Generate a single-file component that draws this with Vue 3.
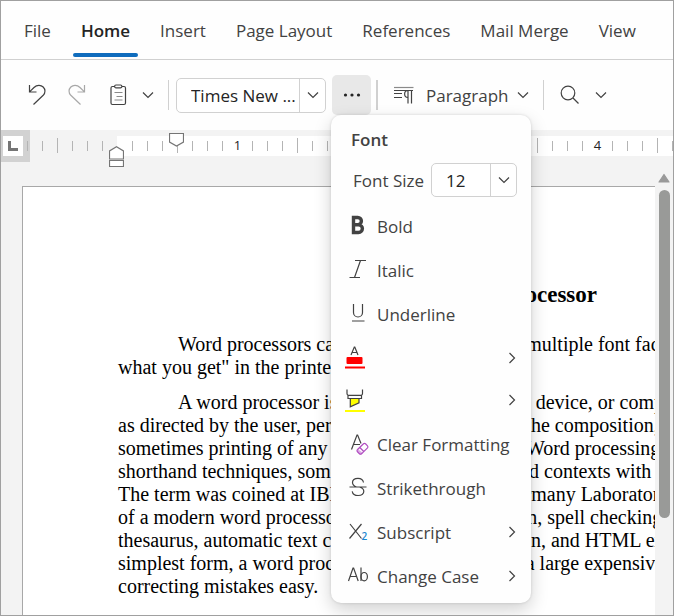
<script setup>
import { ref } from 'vue'

const tabs = ['File', 'Home', 'Insert', 'Page Layout', 'References', 'Mail Merge', 'View']
const activeTab = ref('Home')
const fontName = ref('Times New ...')
const fontSize = ref('12')

const menuItems = [
  { id: 'bold', label: 'Bold' },
  { id: 'italic', label: 'Italic' },
  { id: 'underline', label: 'Underline' },
  { id: 'color', label: '', name: 'Font color', sub: true },
  { id: 'highlight', label: '', name: 'Highlight color', sub: true },
  { id: 'clear', label: 'Clear Formatting' },
  { id: 'strike', label: 'Strikethrough' },
  { id: 'subscript', label: 'Subscript', sub: true },
  { id: 'case', label: 'Change Case', sub: true },
]

// Eight ticks per inch, counted from the left margin (zero).
const ticks = Array.from({ length: 120 }, (_, i) => {
  const n = i - 6
  const inch = n % 8 === 0
  return { n, label: inch && n > 0 ? String(n / 8) : '', blank: inch, tall: !inch && n % 4 === 0 }
})

const first = [
  'Word processors can usually create several multiple font faces on the screen,',
  'what you get" in the printed output.',
]
const second = [
  'A word processor is an electronic or manual device, or computer software application, that',
  'as directed by the user, performs word processing: the composition, editing, formatting and',
  'sometimes printing of any sort of written material. Word processing can also refer to advanced',
  'shorthand techniques, sometimes used in specialized contexts with a specially modified typewriter.',
  "The term was coined at IBM's Böblingen, West Germany Laboratory in the 1960s. Typical features",
  'of a modern word processor include font application, spell checking, grammar checking, a built-in',
  'thesaurus, automatic text correction, Web integration, and HTML exporting, among others. In its',
  'simplest form, a word processor is little more than a large expensive typewriter that makes',
  'correcting mistakes easy.',
]
</script>

<template>
  <div class="editor">
    <nav class="tabs" aria-label="Ribbon">
      <button
        v-for="t in tabs"
        :key="t"
        type="button"
        class="tab"
        :class="{ active: t === activeTab }"
        @click="activeTab = t"
      >{{ t }}</button>
    </nav>

    <div class="toolbar">
      <button type="button" class="tool undo" aria-label="Undo">
        <svg width="20" height="22" viewBox="0 0 20 22"><path d="M2.500 1v7h7M2.800 7.700L7 3.500C10 .5 14 .8 16.200 3s2.500 5.800 0 8.300L6.500 20.500" /></svg>
      </button>
      <button type="button" class="tool redo" aria-label="Redo">
        <svg width="20" height="22" viewBox="0 0 20 22"><path d="M17.500 1v7h-7M17.200 7.700L13 3.500C10 .5 6 .8 3.800 3s-2.500 5.800 0 8.300L13.500 20.500" /></svg>
      </button>
      <button type="button" class="tool paste" aria-label="Paste">
        <svg width="18" height="22" viewBox="0 0 18 22"><path d="M5.500 2.500H3.500A1.500 1.500 0 0 0 2 4v15a1.500 1.500 0 0 0 1.500 1.500H15a1.500 1.500 0 0 0 1.500-1.500V4A1.500 1.500 0 0 0 15 2.500h-2M7 1h4.500a1.300 1.300 0 0 1 0 2.800H7A1.300 1.300 0 0 1 7 1z" /><path class="faint" d="M5.500 8.500h8M7.500 12.500h6M5.500 16h8" /></svg>
      </button>
      <button type="button" class="tool drop" aria-label="Paste options">
        <svg width="12" height="8" viewBox="0 0 12 8"><path d="M1 1.500l5 5 5-5" /></svg>
      </button>
      <span class="sep"></span>
      <div class="combo font-combo">
        <input v-model="fontName" type="text" aria-label="Font family" />
        <button type="button" aria-label="Show fonts">
          <svg width="12" height="8" viewBox="0 0 12 8"><path d="M1 1.500l5 5 5-5" /></svg>
        </button>
      </div>
      <div class="more-wrap">
        <button type="button" class="more" aria-label="More font commands" aria-expanded="true">
          <svg width="18" height="4" viewBox="0 0 18 4"><circle cx="2.500" cy="2" r="1.600" /><circle cx="9" cy="2" r="1.600" /><circle cx="15.500" cy="2" r="1.600" /></svg>
        </button>

        <div class="menu">
          <h2>Font</h2>
          <div class="size-row">
            <label for="font-size">Font Size</label>
            <div class="combo size-combo">
              <input id="font-size" v-model="fontSize" type="text" />
              <button type="button" aria-label="Show sizes">
                <svg width="12" height="8" viewBox="0 0 12 8"><path d="M1 1.500l5 5 5-5" /></svg>
              </button>
            </div>
          </div>
          <button
            v-for="m in menuItems"
            :key="m.id"
            type="button"
            class="item"
            :class="m.id"
            :aria-label="m.name"
          >
            <svg class="icon" width="24" height="24" viewBox="0 0 24 24">
              <path v-if="m.id === 'bold'" class="heavy" d="M8.500 3.500h4.300a3.500 3.500 0 0 1 0 7.200H8.500zM8.500 10.700h5a3.900 3.900 0 0 1 0 7.800h-5z" />
              <path v-else-if="m.id === 'italic'" d="M10 2.500h11M4.500 19.500h10.500M15.500 2.500L9.500 19.500" />
              <path v-else-if="m.id === 'underline'" d="M8.500 2v8.500a4.500 4.500 0 0 0 9 0V2M7 19h12.500" />
              <g v-else-if="m.id === 'color'">
                <path d="M8 9L11.300 1h.5L15 9M9 6.500h5" />
                <rect x="3.500" y="11" width="16" height="7" rx="1" fill="#f00" stroke="none" />
                <rect x="2" y="20.500" width="20" height="2" fill="#f00" stroke="none" />
              </g>
              <g v-else-if="m.id === 'highlight'">
                <path d="M7.300 10.500h8.700v4.300L7.300 18.700z" fill="#ff0" />
                <path d="M4 1.500v4a2 2 0 0 0 1 1.800h13.500a2 2 0 0 0 1-1.800v-4M5 7.300v3.200h13.500V7.300" />
                <rect x="2" y="22" width="20" height="2" fill="#ff0" stroke="none" />
              </g>
              <g v-else-if="m.id === 'clear'">
                <path d="M6.500 17.500L12 3h.6L16 11.500M8.500 12.500h6.500" />
                <path d="M13 17.300L18 21l-1.500 1.300a1.500 1.500 0 0 1-2 0L12.500 20.300a1.500 1.500 0 0 1 0-2.300z" class="eraser-fill" />
                <path d="M12.600 17.500L18.500 11.800a1.500 1.500 0 0 1 2 0l2 2a1.500 1.500 0 0 1 0 2L16.500 21.800a1.500 1.500 0 0 1-2 0l-2-2a1.500 1.500 0 0 1 .1-2.300zM14.800 15.500l4 4" class="eraser" />
              </g>
              <path v-else-if="m.id === 'strike'" d="M4.500 11h17M18.500 6.500c-.4-2.700-2.400-4.200-5.500-4.200-3.200 0-5.500 1.600-5.500 4.200 0 2.200 1.500 3.500 4 4.500M14.500 11c2.600.8 4.300 2 4.300 4.300 0 2.600-2.300 4.200-5.700 4.200-3.300 0-5.400-1.600-5.900-4.200" />
              <g v-else-if="m.id === 'subscript'">
                <path d="M5 4L16.500 18.500M16.500 4L4.500 18.500" />
                <text x="16.500" y="20" class="glyph-sub">2</text>
              </g>
              <g v-else>
                <path d="M3.500 17L8 4h.6L13.200 17M5.200 12.500h6.500" />
                <path d="M16 3.500v13.500" /><ellipse cx="19.200" cy="12.700" rx="3.200" ry="4.200" />
              </g>
            </svg>
            <span class="label">{{ m.label }}</span>
            <svg v-if="m.sub" class="arrow" width="8" height="12" viewBox="0 0 8 12"><path d="M1.500 1l5 5-5 5" /></svg>
          </button>
        </div>
      </div>
      <span class="sep wide"></span>
      <button type="button" class="tool para">
        <svg width="22" height="18" viewBox="0 0 22 18"><path d="M1 1.500h19.500" class="faint" /><path d="M1 4.500h19M1 7.500h8M1 11.500h8M15 4.500c-4.500 0-4.500 7 0 7M15 4.500v13M18.500 4.500v13" /></svg>
        <span>Paragraph</span>
        <svg width="12" height="8" viewBox="0 0 12 8"><path d="M1 1.500l5 5 5-5" /></svg>
      </button>
      <span class="sep"></span>
      <button type="button" class="tool find" aria-label="Find">
        <svg width="20" height="20" viewBox="0 0 20 20"><circle cx="8" cy="8" r="6.800" /><path d="M13 13l5.500 5.500" /></svg>
        <svg width="12" height="8" viewBox="0 0 12 8"><path d="M1 1.500l5 5 5-5" /></svg>
      </button>
    </div>

    <div class="ruler">
      <button type="button" class="corner" aria-label="Tab stop">
        <svg width="20" height="20" viewBox="0 0 20 20"><path d="M6.500 5v8.500H15" /></svg>
      </button>
      <div class="scale">
        <span v-for="t in ticks" :key="t.n" class="cell" :class="{ tall: t.tall, blank: t.blank }">{{ t.label }}</span>
      </div>
      <svg class="first-indent" width="15" height="14" viewBox="0 0 15 14"><path d="M.5 .5h14v8.500L7.500 13 .5 9z" /></svg>
      <svg class="left-indent" width="15" height="21" viewBox="0 0 15 21"><path d="M.5 13V5L7.500 .8 14.500 5v8zM.5 14.500h14v6H.5z" /></svg>
    </div>

    <div class="workspace">
      <main class="page">
        <h1>A Word Processor</h1>
        <p><span v-for="l in first" :key="l">{{ l }}</span></p>
        <p><span v-for="l in second" :key="l">{{ l }}</span></p>
      </main>
      <div class="scrollbar">
        <svg width="12" height="10" viewBox="0 0 12 10"><path d="M6 1.500L11 9H1z" /></svg>
        <span class="thumb"></span>
        <span class="rest"></span>
      </div>
    </div>
  </div>
</template>

<style>
body {
  background: #fefefe;
}
</style>

<style scoped>
* {
  box-sizing: border-box;
}
.editor {
  display: flex;
  flex-direction: column;
  height: 100vh;
  overflow: hidden;
  border: 1px solid #a0a0a0;
  background: #fefefe;
  color: #424242;
  font-family: "Open Sans", "Noto Sans", sans-serif;
  font-size: 17px;
}
button,
input {
  font: inherit;
  color: inherit;
  background: none;
  border: 0;
  padding: 0;
  margin: 0;
  outline: 0;
}
svg {
  flex: none;
  display: block;
  fill: none;
  stroke: #424242;
  stroke-width: 1.2;
}
.faint {
  stroke: #8a8a8a;
}
.tabs {
  flex: none;
  display: flex;
  gap: 14px;
  height: 59px;
  padding: 0 15px;
  border-bottom: 1px solid #d0d0d0;
}
.tab {
  height: 56px;
  padding: 6px 8px 0;
  border-bottom: 4px solid transparent;
  white-space: nowrap;
}
.tab.active {
  position: relative;
  color: #242424;
  font-weight: 600;
}
.tab.active::after {
  content: "";
  position: absolute;
  left: 0;
  right: 0;
  bottom: -4px;
  height: 4px;
  border-radius: 2px;
  background: #0f6cbd;
}
.toolbar {
  flex: none;
  display: flex;
  align-items: center;
  height: 70px;
  padding-left: 26px;
}
.tool {
  display: flex;
  align-items: center;
}
.undo {
  margin-right: 20px;
}
.redo {
  margin-right: 22px;
  opacity: 0.45;
}
.paste {
  margin-right: 15px;
}
.sep {
  width: 1px;
  height: 30px;
  margin: 0 7px 0 14px;
  background: #d0d0d0;
}
.sep.wide {
  width: 2px;
  margin: 0 15px 0 5px;
}
.combo {
  display: flex;
  height: 35px;
  border: 1px solid #d1d1d1;
  border-radius: 5px;
  background: #fff;
  color: #242424;
}
.combo input {
  flex: 1;
  min-width: 0;
  padding-left: 14px;
}
.combo button {
  display: grid;
  place-items: center;
  width: 26px;
  border-left: 1px solid #d1d1d1;
}
.font-combo {
  width: 150px;
  margin-right: 6px;
}
.more-wrap {
  position: relative;
}
.more {
  display: grid;
  place-items: center;
  width: 39px;
  height: 40px;
  border-radius: 5px;
  background: #e8e8e8;
}
.more svg {
  fill: #242424;
  stroke: none;
}
.para span {
  margin: 0 8px 0 11px;
}
.find {
  gap: 15px;
  margin-left: 9px;
}
.menu {
  position: absolute;
  z-index: 5;
  top: 100%;
  left: -1px;
  width: 200px;
  padding: 10px 0 5px;
  border-radius: 10px;
  background: #fefefe;
  box-shadow: 0 7px 18px rgba(0, 0, 0, 0.18), 0 0 3px rgba(0, 0, 0, 0.14);
}
.menu h2 {
  margin: 0;
  padding-left: 20px;
  font-size: 17px;
  font-weight: 600;
  line-height: 30px;
}
.size-row {
  display: flex;
  align-items: center;
  justify-content: space-between;
  margin: 8px 14px 7px 22px;
  white-space: nowrap;
}
.size-combo {
  flex: none;
  width: 86px;
  height: 34px;
}
.item {
  display: flex;
  align-items: center;
  width: 100%;
  height: 44px;
  padding: 0 15px 0 14px;
  text-align: left;
}
.item.color,
.item.highlight {
  height: 42px;
  padding-left: 12px;
}
.item.color,
.item.clear {
  margin-top: 1px;
}
.icon {
  overflow: visible;
}
.label {
  flex: 1;
  padding-left: 8px;
  white-space: nowrap;
}
.heavy {
  stroke-width: 3.4;
}
.eraser {
  stroke: #b04cc0;
}
.eraser-fill {
  fill: #dcaae4;
  stroke: none;
}
.glyph-sub {
  fill: #1a86d0;
  stroke: none;
  font-size: 10px;
  font-weight: 600;
}
.ruler {
  position: relative;
  flex: none;
  display: flex;
  height: 32px;
  background: #f3f3f3;
}
.ruler::before {
  content: "";
  position: absolute;
  left: 116px;
  right: 0;
  top: 6px;
  height: 20px;
  background: #fff;
}
.corner {
  flex: none;
  display: flex;
  align-items: flex-start;
  width: 29px;
  height: 32px;
  padding: 6px 0 0 2px;
  background: #d2d2d2;
}
.corner svg {
  background: #fff;
  stroke: #757575;
  stroke-width: 3;
}
.scale {
  position: relative;
  flex: 1;
  display: flex;
  height: 32px;
  margin-left: -10px;
  overflow: hidden;
}
.cell {
  flex: none;
  display: flex;
  justify-content: center;
  width: 15px;
  color: #242424;
  font-size: 13px;
  line-height: 30px;
}
.cell:not(.blank)::before {
  content: "";
  width: 1px;
  height: 10px;
  margin-top: 11px;
  background: #b4b4b4;
}
.cell.tall::before {
  height: 15px;
  margin-top: 8px;
}
.first-indent,
.left-indent {
  position: absolute;
  fill: #fff;
  stroke: #757575;
}
.first-indent {
  left: 168px;
  top: 3px;
}
.left-indent {
  left: 108px;
  top: 16px;
}
.workspace {
  flex: 1;
  min-height: 0;
  display: flex;
  background: #f3f3f3;
}
.page {
  flex: 1;
  min-width: 0;
  overflow: hidden;
  margin: 24px 0 0 21px;
  padding: 94px 0 0 95px;
  border: solid #a8a8a8;
  border-width: 1px 0 0 1px;
  background: #fff;
  color: #000;
  font-family: "Liberation Serif", serif;
  font-size: 20px;
  line-height: 23px;
}
.page h1 {
  width: 780px;
  margin: 0 0 24px;
  font-size: 23px;
  line-height: 28px;
  text-align: center;
}
.page p {
  margin: 0 0 12px;
}
.page p span {
  display: block;
  white-space: nowrap;
}
.page p span:first-child {
  padding-left: 60px;
}
.scrollbar {
  flex: none;
  display: flex;
  flex-direction: column;
  align-items: center;
  width: 18px;
  padding-top: 11px;
}
.scrollbar svg {
  fill: #999;
  stroke: #999;
  stroke-linejoin: round;
}
.thumb {
  flex: 328;
  width: 11px;
  margin-top: 7px;
  border-radius: 6px;
  background: #999a98;
}
.rest {
  flex: 97;
}
</style>
